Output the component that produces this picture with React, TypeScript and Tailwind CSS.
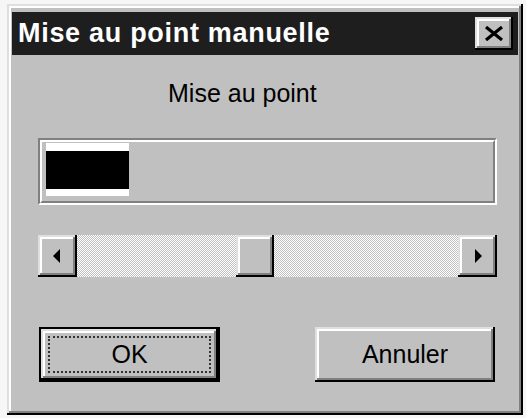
import React from 'react'

const raised =
  'shadow-[inset_-2px_-2px_0_#000000,inset_2px_2px_0_#dfdfdf,inset_-4px_-4px_0_#808080,inset_4px_4px_0_#ffffff]'

function Arrow({ dir }: { dir: 'left' | 'right' }) {
  return (
    <svg width="8" height="14" viewBox="0 0 8 14">
      {dir === 'left' ? (
        <polygon points="8,0 8,14 1,7" fill="#000" />
      ) : (
        <polygon points="0,0 0,14 7,7" fill="#000" />
      )}
    </svg>
  )
}

export default function App() {
  return (
    <div
      className="min-h-[418px] bg-[#f6f6f6] pt-[4px] pl-[7px]"
      style={{ fontFamily: '"Liberation Sans", Arial, sans-serif' }}
    >
      <div
        className={`w-[516px] h-[411px] bg-[#c0c0c0] pt-[8px] px-[5px] ${raised}`}
      >
        {/* Title bar */}
        <div className="h-[43px] bg-[#1e1e1e] flex items-center justify-between pl-[6px] pr-[5px]">
          <span className="text-white font-bold text-[27px] leading-none tracking-[0.7px]">
            Mise au point manuelle
          </span>
          <button className={`w-[38px] h-[33px] bg-[#c0c0c0] flex items-center justify-center ${raised}`}>
            <svg width="20" height="15" viewBox="0 0 20 15">
              <path d="M2 1 L18 14 M18 1 L2 14" stroke="#000" strokeWidth="3.2" />
            </svg>
          </button>
        </div>

        {/* Label */}
        <div className="mt-[24px] pl-[156px] text-[25px] leading-[29px] text-black">
          Mise au point
        </div>

        {/* Progress */}
        <div className="mt-[30px] ml-[26px] w-[459px] h-[67px] border-2 border-t-[#808080] border-l-[#808080] border-b-white border-r-white">
          <div className="h-full border-2 border-t-white border-l-white border-b-[#808080] border-r-[#808080] pl-[4px] pt-[1px]">
            <div className="w-[83px] h-[53px] bg-white flex flex-col pt-[8px] pb-[7px]">
              <div className="flex-1 bg-black" />
            </div>
          </div>
        </div>

        {/* Scrollbar */}
        <div className="mt-[30px] ml-[26px] w-[459px] h-[42px] flex">
          <div className={`w-[39px] bg-[#c0c0c0] flex items-center justify-center pr-[4px] ${raised}`}>
            <Arrow dir="left" />
          </div>
          <div className="w-[159px] bg-[repeating-conic-gradient(#c0c0c0_0_25%,#ffffff_0_50%)] bg-[length:2px_2px]" />
          <div className={`w-[38px] bg-[#c0c0c0] ${raised}`} />
          <div className="flex-1 bg-[repeating-conic-gradient(#c0c0c0_0_25%,#ffffff_0_50%)] bg-[length:2px_2px]" />
          <div className={`w-[39px] bg-[#c0c0c0] flex items-center justify-center pl-[2px] ${raised}`}>
            <Arrow dir="right" />
          </div>
        </div>

        {/* Buttons */}
        <div className="mt-[50px] ml-[27px] w-[456px] flex justify-between">
          <button className="w-[181px] h-[55px] bg-black p-[2px]">
            <div className={`h-full bg-[#c0c0c0] flex p-[7px] ${raised}`}>
              <span className="flex-1 border-2 border-dotted border-[#333] flex items-center justify-center text-[25px] leading-none text-black">
                OK
              </span>
            </div>
          </button>
          <button
            className={`w-[180px] h-[55px] bg-[#c0c0c0] flex items-center justify-center text-[25px] leading-none text-black ${raised}`}
          >
            Annuler
          </button>
        </div>
      </div>
    </div>
  )
}
